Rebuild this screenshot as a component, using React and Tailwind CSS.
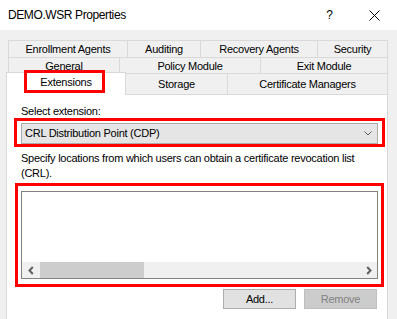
export default function App() {
  return (
    <div className="w-[397px] h-[319px] overflow-hidden bg-[#f0f0f0] font-['Liberation_Sans',Arial,sans-serif] text-[11px] tracking-[-0.25px] text-black">
      {/* Title bar */}
      <div className="h-[30px] bg-white flex items-center">
        <div className="pl-[8px] text-[12px] tracking-[-0.4px]">DEMO.WSR Properties</div>
        <div className="ml-auto flex h-full">
          <div className="w-[45px] h-full flex items-center justify-center text-[12px]">?</div>
          <div className="w-[45px] h-full flex items-center justify-center">
            <svg width="11" height="11" viewBox="0 0 11 11">
              <path d="M0.5 0.5 L10.5 10.5 M10.5 0.5 L0.5 10.5" stroke="#000" strokeWidth="1" fill="none" />
            </svg>
          </div>
        </div>
      </div>

      {/* Tab rows */}
      <div className="ml-[8px] w-[380px] mt-[10px] h-[17px] flex">
        <div className="w-[119px] h-full flex items-center justify-center border-t border-l border-[#d9d9d9]">Enrollment Agents</div>
        <div className="w-[73px] h-full flex items-center justify-center border-t border-l border-[#d9d9d9]">Auditing</div>
        <div className="w-[117px] h-full flex items-center justify-center border-t border-l border-[#d9d9d9]">Recovery Agents</div>
        <div className="w-[71px] h-full flex items-center justify-center border-t border-l border-r border-[#d9d9d9]">Security</div>
      </div>
      <div className="ml-[8px] w-[380px] h-[16px] flex">
        <div className="w-[111px] h-full pt-[2px] flex items-center justify-center border-t border-l border-[#d9d9d9]">General</div>
        <div className="w-[141px] h-full pt-[2px] flex items-center justify-center border-t border-l border-[#d9d9d9]">Policy Module</div>
        <div className="w-[128px] h-full pt-[2px] flex items-center justify-center border-t border-l border-r border-[#d9d9d9]">Exit Module</div>
      </div>
      <div className="ml-[8px] w-[380px] h-[21px] flex items-start">
        <div className="relative z-10 -ml-[2px] -mt-[1px] w-[120px] h-[23px] pb-[3px] flex items-center justify-center bg-white border-t border-l border-r border-[#d9d9d9]">
          Extensions
          <div className="absolute left-[17px] -top-[3px] w-[81px] h-[23px] border-[3px] border-[#ff0000]"></div>
        </div>
        <div className="w-[101px] h-full flex items-center justify-center border-t border-[#d9d9d9]">Storage</div>
        <div className="w-[161px] h-full flex items-center justify-center border-t border-l border-r border-[#d9d9d9]">Certificate Managers</div>
      </div>

      {/* Panel */}
      <div className="ml-[6px] w-[382px] h-[300px] bg-white border border-[#d9d9d9] pt-[10px] pl-[14px] pr-[9px]">
        <div className="leading-[13px]">Select extension:</div>
        <div className="-mx-[7px] border-[3px] border-[#ff0000] px-[4px] pt-[2px]">
          <div className="h-[21px] bg-[#e5e5e5] border border-[#acacac] flex items-center pl-[3px] pr-[5px]">
            <span>CRL Distribution Point (CDP)</span>
            <svg className="ml-auto" width="8" height="5" viewBox="0 0 8 5">
              <path d="M0.5 0.5 L4 4 L7.5 0.5" stroke="#606060" strokeWidth="1" fill="none" />
            </svg>
          </div>
        </div>
        <div className="mt-[4px] leading-[15px]">
          <div className="whitespace-nowrap">Specify locations from which users can obtain a certificate revocation list</div>
          <div>(CRL).</div>
        </div>
        <div className="mt-[2px] -mx-[6px] border-[3px] border-[#ff0000] px-[3px] pt-[5px] pb-[5px]">
          <div className="h-[88px] bg-white border border-[#828282] flex flex-col justify-end">
            <div className="h-[16px] bg-[#f0f0f0] flex">
              <div className="w-[18px] h-full flex items-center justify-center">
                <svg width="6" height="9" viewBox="0 0 6 9">
                  <path d="M4.8 1 L1.5 4.5 L4.8 8" stroke="#606060" strokeWidth="2" fill="none" />
                </svg>
              </div>
              <div className="w-[104px] h-full bg-[#cdcdcd]"></div>
              <div className="flex-1"></div>
              <div className="w-[17px] h-full flex items-center justify-center">
                <svg width="6" height="9" viewBox="0 0 6 9">
                  <path d="M1.2 1 L4.5 4.5 L1.2 8" stroke="#606060" strokeWidth="2" fill="none" />
                </svg>
              </div>
            </div>
          </div>
        </div>
        <div className="mt-[2px] flex justify-end gap-[8px] pr-[1px]">
          <div className="w-[73px] h-[20px] bg-[#e1e1e1] border border-[#adadad] flex items-center justify-center">Add...</div>
          <div className="w-[73px] h-[20px] bg-[#cccccc] border border-[#bfbfbf] text-[#838383] flex items-center justify-center">Remove</div>
        </div>
      </div>
    </div>
  );
}
